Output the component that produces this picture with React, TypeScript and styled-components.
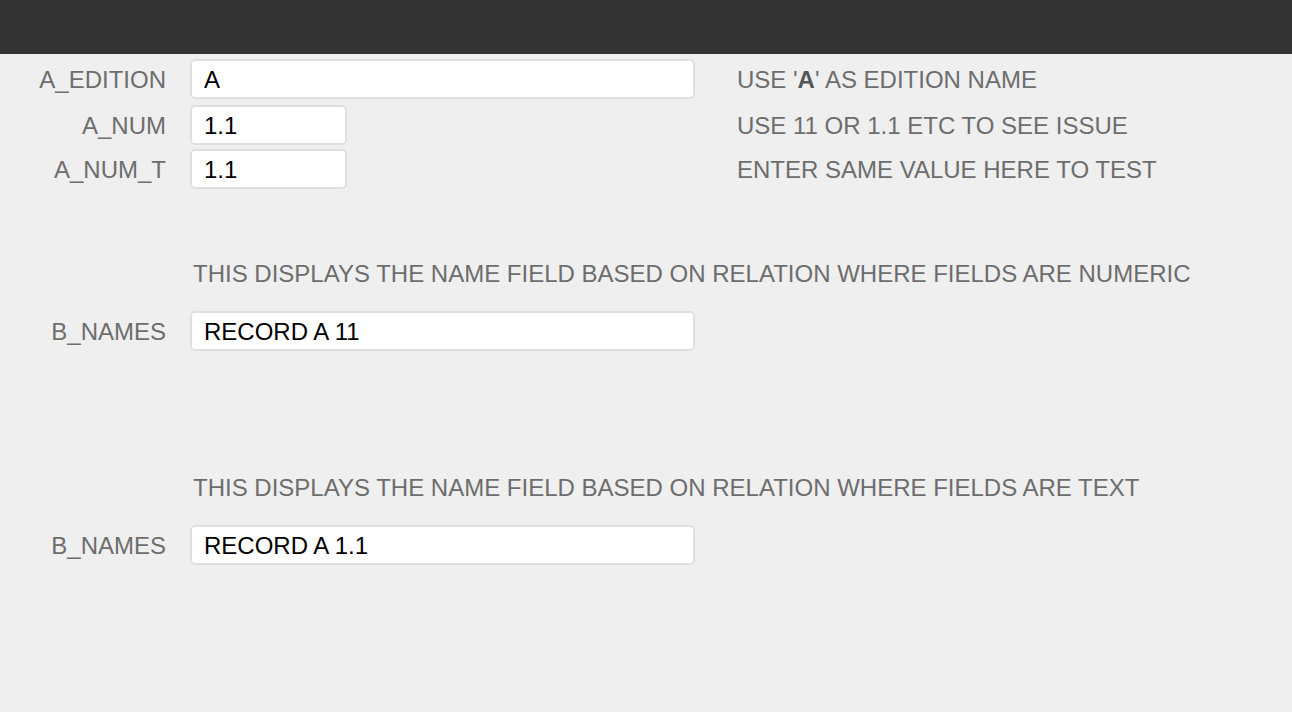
import React from "react";
import styled, { createGlobalStyle } from "styled-components";

const GlobalStyle = createGlobalStyle`
    html, body {
        margin: 0;
        padding: 0;
        background: #efefef;
        font-family: "Liberation Sans", Arial, sans-serif;
    }
`;

const Page = styled.div`
    min-height: 712px;
    background: #efefef;
`;

const TopBar = styled.div`
    height: 54px;
    background: #333333;
`;

const Form = styled.div`
    padding-top: 5px;
    display: flex;
    flex-direction: column;
`;

const Row = styled.div`
    display: grid;
    grid-template-columns: 166px 505px auto;
    column-gap: 24px;
    align-items: center;
    height: 40px;
    margin-top: ${({ $gap }) => $gap || 0}px;
    font-size: 24px;
    line-height: 28px;
`;

const Label = styled.div`
    text-align: right;
    color: #6d6d6d;
    white-space: nowrap;
    padding-top: 1px;
`;

const Field = styled.div`
    box-sizing: border-box;
    width: ${({ $width }) => $width}px;
    height: 40px;
    background: #ffffff;
    border: 2px solid #e0e0e0;
    border-radius: 5px;
    padding: 1px 0 0 12px;
    display: flex;
    align-items: center;
    color: #000;
`;

const Hint = styled.div`
    padding: 1px 0 0 18px;
    color: #6d6d6d;
    white-space: nowrap;
    b {
        color: #555;
    }
`;

const Heading = styled.div`
    grid-column: 2 / 4;
    padding: 0 0 0 3px;
    color: #6d6d6d;
    white-space: nowrap;
`;

export default function App() {
    return (
        <Page>
            <GlobalStyle />
            <TopBar />
            <Form>
                <Row>
                    <Label>A_EDITION</Label>
                    <Field $width={505}>A</Field>
                    <Hint>USE '<b>A</b>' AS EDITION NAME</Hint>
                </Row>
                <Row $gap={6}>
                    <Label>A_NUM</Label>
                    <Field $width={157}>1.1</Field>
                    <Hint>USE 11 OR 1.1 ETC TO SEE ISSUE</Hint>
                </Row>
                <Row $gap={4}>
                    <Label>A_NUM_T</Label>
                    <Field $width={157}>1.1</Field>
                    <Hint>ENTER SAME VALUE HERE TO TEST</Hint>
                </Row>

                <Row $gap={65}>
                    <div />
                    <Heading>THIS DISPLAYS THE NAME FIELD BASED ON RELATION WHERE FIELDS ARE NUMERIC</Heading>
                </Row>
                <Row $gap={17}>
                    <Label>B_NAMES</Label>
                    <Field $width={505}>RECORD A 11</Field>
                </Row>

                <Row $gap={117}>
                    <div />
                    <Heading>THIS DISPLAYS THE NAME FIELD BASED ON RELATION WHERE FIELDS ARE TEXT</Heading>
                </Row>
                <Row $gap={17}>
                    <Label>B_NAMES</Label>
                    <Field $width={505}>RECORD A 1.1</Field>
                </Row>
            </Form>
        </Page>
    );
}
